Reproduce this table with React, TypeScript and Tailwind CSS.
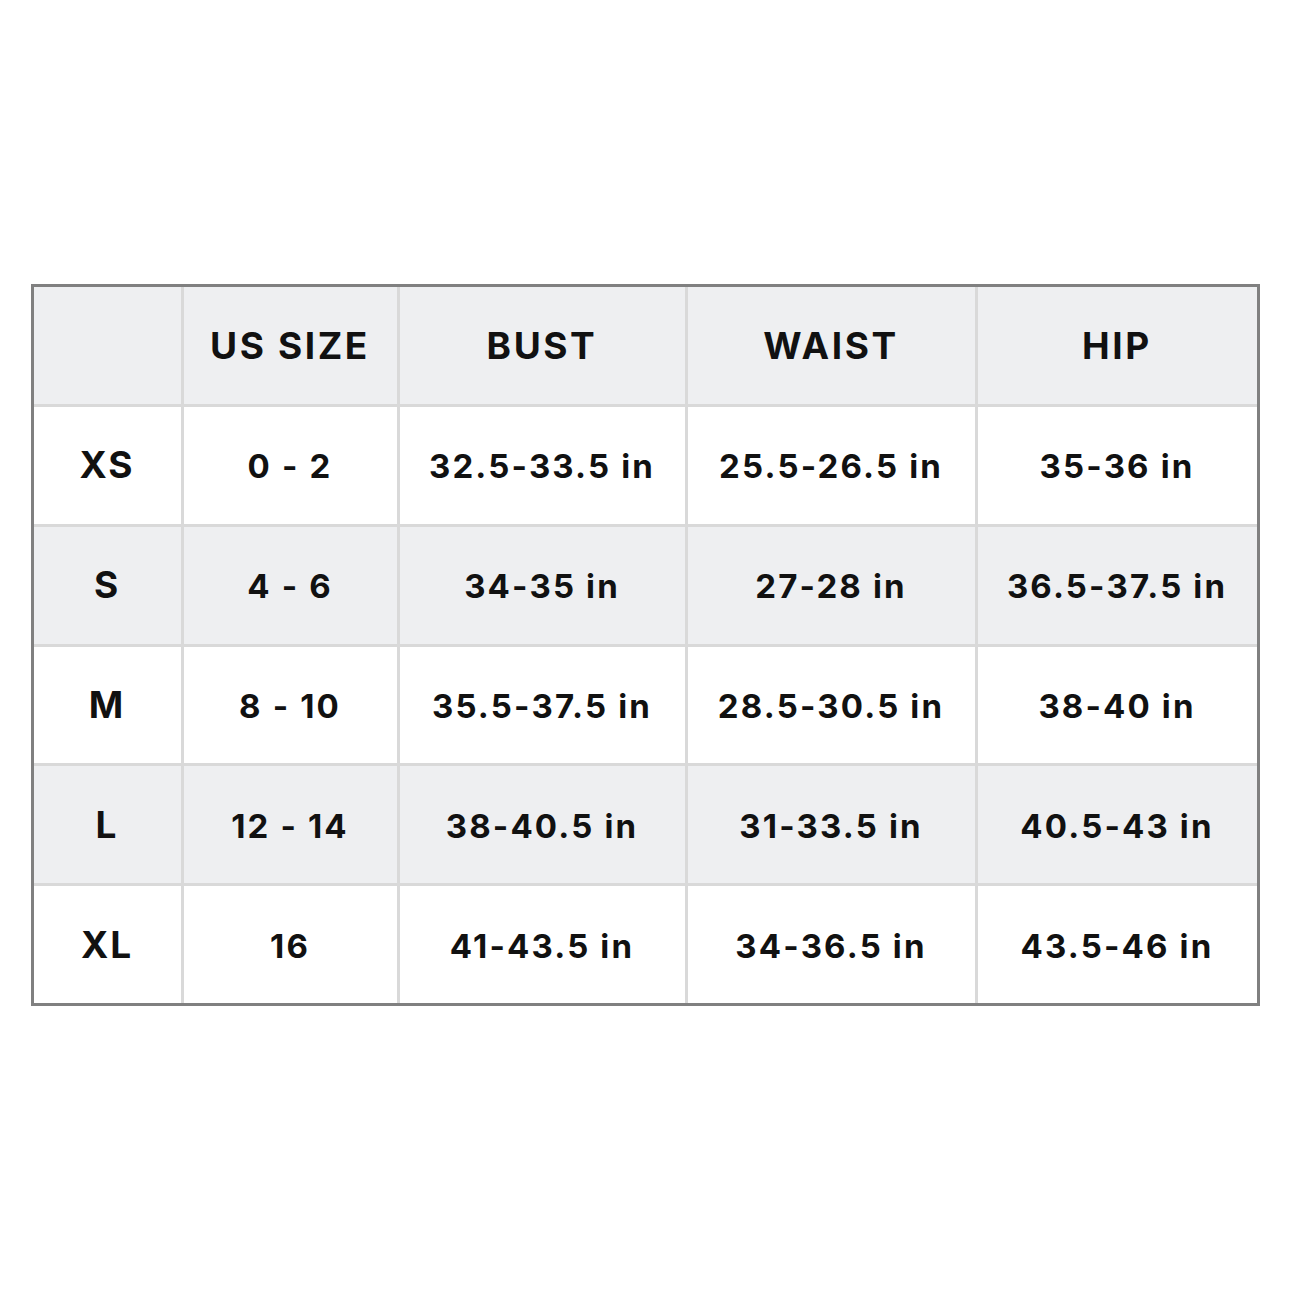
const headers = ['', 'US SIZE', 'BUST', 'WAIST', 'HIP'];

const rows = [
  ['XS', '0 - 2', '32.5-33.5 in', '25.5-26.5 in', '35-36 in'],
  ['S', '4 - 6', '34-35 in', '27-28 in', '36.5-37.5 in'],
  ['M', '8 - 10', '35.5-37.5 in', '28.5-30.5 in', '38-40 in'],
  ['L', '12 - 14', '38-40.5 in', '31-33.5 in', '40.5-43 in'],
  ['XL', '16', '41-43.5 in', '34-36.5 in', '43.5-46 in'],
];

const App = () => {
  return (
    <div className="h-[1290px] w-[1290px] bg-white flex items-center justify-center font-['Inter',sans-serif] text-[#111]">
      <div className="w-[1229px] h-[722px] border-[3px] border-[#808080] bg-[#d9d9d9] grid grid-cols-[147px_213px_285px_287px_1fr] grid-rows-6 gap-[3px]">
        {headers.map((h, i) => (
          <div
            key={`h-${i}`}
            className="bg-[#eeeff1] flex items-center justify-center text-[37px] font-bold tracking-[0.07em]"
          >
            {h}
          </div>
        ))}
        {rows.map((row, r) =>
          row.map((cell, c) => (
            <div
              key={`${r}-${c}`}
              className={`${r % 2 === 1 ? 'bg-[#eeeff1]' : 'bg-white'} flex items-center justify-center font-bold ${
                c === 0 ? 'text-[37px] tracking-[0.05em]' : 'text-[33px] tracking-[0.065em] pt-[4px]'
              }`}
            >
              {cell}
            </div>
          ))
        )}
      </div>
    </div>
  );
};

export default App;
